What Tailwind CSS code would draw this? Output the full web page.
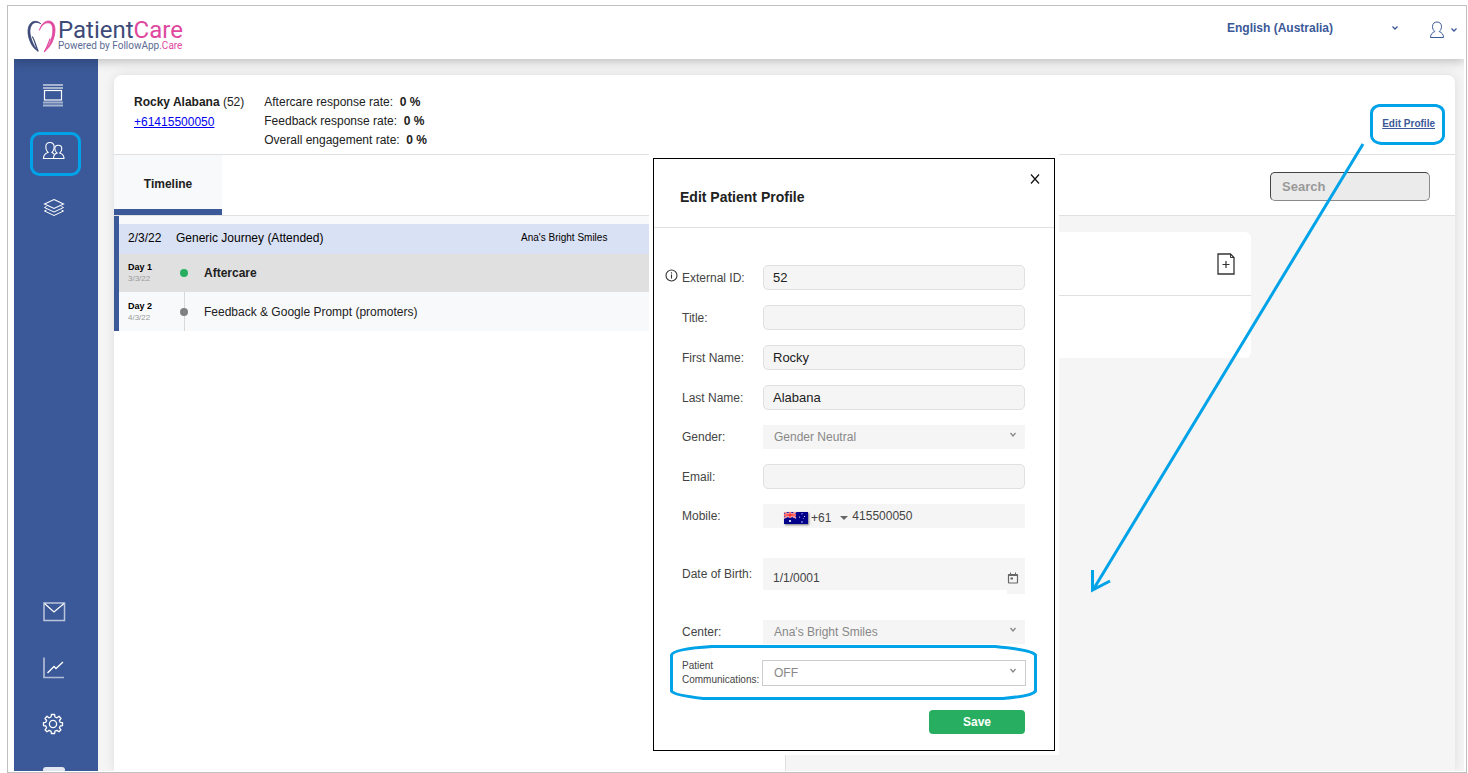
<!DOCTYPE html>
<html lang="en">
<head>
    <meta charset="UTF-8">
    <meta name="viewport" content="width=device-width, initial-scale=1.0">
    <title>PatientCare</title>
    <script src="https://cdn.jsdelivr.net/npm/@tailwindcss/browser@4"></script>
</head>
<body class="bg-white font-['Liberation_Sans',Arial,sans-serif] text-xs text-[#212121]">
    <div class="relative h-screen pt-[5px] pl-[7px] pr-px">
        <div class="flex h-full flex-col border border-[#c0c0c0] pr-0.5 pb-px pl-1.5">

            <!-- Header -->
            <header class="relative z-10 flex h-[53px] shrink-0 items-start justify-between bg-white shadow-[0_2px_10px_rgba(0,0,0,0.25)] [clip-path:inset(0_0_-20px_0)]">
                <a href="#" class="flex items-start gap-px pt-[13px] pl-3" aria-label="PatientCare">
                    <svg class="h-[34px] w-[31px]" viewBox="0 0 31 34" fill="none" stroke-linecap="round">
                        <path d="M14.500 4.500C11.500 1.500 7 1.500 4.500 4.500C1 8.500 1.500 16 4 22C5.500 26 8 30 12 32C9.500 29 7.500 26 6 22C3.500 15 3 9.500 6 5.500C8 3 11 2.800 14.500 4.500Z" fill="#3d4a78" stroke="#3d4a78" stroke-width=".8"/>
                        <path d="M6.500 18C8.500 21 9.500 26 12 32" stroke="#3d4a78" stroke-width="1.300"/>
                        <path d="M13.500 11C15 5.500 18.500 2 22.500 2C27 2 29 6 29 11C28.800 19 25 28 18.500 32.500C23.500 27 26.500 19 26.800 12C27 7 25.500 3.800 22 3.800C18.500 3.800 15.500 6.500 13.500 11Z" fill="#e0479e" stroke="#e0479e" stroke-width=".8"/>
                        <path d="M24 20C22.500 24 21 28.500 18.500 32.500" stroke="#e0479e" stroke-width="1.300"/>
                    </svg>
                    <span class="flex flex-col font-[Roboto,sans-serif]">
                        <span class="h-[21px] text-2xl leading-[23px] text-[#3d4a78]">Patient<span class="text-[#e0479e]">Care</span></span>
                        <span class="text-[10px] leading-3 text-[#5b6b93]">Powered by FollowApp<span class="text-[#e0479e]">.Care</span></span>
                    </span>
                </a>
                <div class="flex items-center pt-[11px] pr-1.5 text-[#3b5998]">
                    <div class="relative mr-[31px] flex items-center">
                        <select aria-label="Language" class="w-[172px] appearance-none bg-transparent font-bold">
                            <option>English (Australia)</option>
                        </select>
                        <svg class="pointer-events-none absolute right-0 h-1.5 w-2" viewBox="0 0 8 6" fill="none" stroke="currentColor" stroke-width="1.300"><path d="M1.500 1.500L4 4L6.500 1.500"/></svg>
                    </div>
                    <button type="button" aria-label="Account" class="flex items-center gap-1.5 pt-1">
                        <svg class="h-[18px] w-[14px]" viewBox="0 0 14 18" fill="none" stroke="currentColor" stroke-width="1"><path d="M4.800 10.500C3.200 9.200 2.500 7.500 2.500 5.500C2.500 2.500 4.500 1 7 1S11.500 2.500 11.500 5.500C11.500 7.500 10.800 9.200 9.200 10.500C11.800 11.500 13.500 13.500 13.500 16.500H.5C.5 13.500 2.200 11.500 4.800 10.500Z"/></svg>
                        <svg class="h-1.5 w-2" viewBox="0 0 8 6" fill="none" stroke="currentColor" stroke-width="1.300"><path d="M1.500 1.500L4 4L6.500 1.500"/></svg>
                    </button>
                </div>
            </header>

            <div class="flex min-h-0 flex-1">
                <!-- Sidebar -->
                <nav class="flex w-[84px] shrink-0 flex-col items-center justify-between overflow-hidden bg-[#3b5998] pr-1 text-white">
                    <div class="flex flex-col items-center gap-8 pt-6">
                        <a href="#" aria-label="Dashboard">
                            <svg class="size-6" viewBox="0 0 24 24" fill="none" stroke="currentColor"><path d="M1 2H21M1 5H21M1 19.500H21M1 22.500H21" stroke-width="1.800" stroke-opacity=".55"/><rect x="2.500" y="7.500" width="17" height="9.500" stroke-width="1.200"/></svg>
                        </a>
                        <a href="#" aria-label="Patients">
                            <svg class="size-6" viewBox="0 0 24 24" fill="none" stroke="currentColor" stroke-width="1.100"><path d="M12 19.500H1.500C1.500 16 3 14.500 6 13.500C4.500 12 3.800 10.500 3.800 8C3.800 5 5.500 3.500 8 3.500S12 5 12.200 8C12.200 10.500 11.500 12 10 13.500C11 14 11.800 14.500 12.300 15.500"/><path d="M15 14C13.500 12.800 12.800 11.500 12.800 9.800C12.800 7.500 14.200 6.200 16.300 6.200S19.800 7.500 19.800 9.800C19.800 11.500 19.200 12.800 17.800 14C20.500 14.800 22 16.500 22 19.500H11.500C11.500 16.500 12.500 14.800 15 14Z"/></svg>
                        </a>
                        <a href="#" aria-label="Journeys">
                            <svg class="size-6" viewBox="0 0 24 24" fill="none" stroke="currentColor" stroke-width="1.100"><path d="M12 4.500L21.500 9L12 13.500L2.500 9Z"/><path d="M4.500 11.500L2.500 12.500L12 17L21.500 12.500L19.500 11.500M4.500 15L2.500 16L12 20.500L21.500 16L19.500 15" stroke-width="1"/></svg>
                        </a>
                    </div>
                    <div class="flex flex-col items-center gap-8">
                        <a href="#" aria-label="Messages">
                            <svg class="size-6" viewBox="0 0 24 24" fill="none" stroke="currentColor"><rect x="2" y="4" width="20.500" height="17.500" stroke-width="1.500" stroke-opacity=".65"/><path d="M2.500 4.500L12 13L22 4.500" stroke-width="1.200"/></svg>
                        </a>
                        <a href="#" aria-label="Reports">
                            <svg class="size-6" viewBox="0 0 24 24" fill="none" stroke="currentColor"><path d="M2 2.500V22.500H22" stroke-width="1.700" stroke-opacity=".6"/><path d="M5.500 18L12 11.500L14 13.500L21 7" stroke-width="1.300"/></svg>
                        </a>
                        <a href="#" aria-label="Settings">
                            <svg class="size-6" viewBox="0 0 24 24" fill="none" stroke="currentColor" stroke-width="1.300" stroke-linejoin="round"><g transform="translate(-1 1)"><circle cx="12" cy="12" r="3.600"/><path d="M10.400 2.500H13.600L14 5L16 5.800L18 4.300L20 6.500L18.400 8.500L19.200 10.300L21.500 10.600V13.600L19.200 14L18.400 15.800L20 17.800L18 19.800L16 18.400L14 19.200L13.600 21.500H10.400L10 19.200L8 18.400L6 19.800L4 17.800L5.600 15.800L4.800 14L2.500 13.600V10.600L4.800 10.300L5.600 8.500L4 6.500L6 4.300L8 5.800L10 5Z"/></g></svg>
                        </a>
                        <span class="h-1 w-[22px] rounded-t-[3px] bg-white/85"></span>
                    </div>
                </nav>

                <!-- Content -->
                <main class="flex min-w-0 flex-1 overflow-hidden bg-[#f5f5f5] pt-4 pr-[9px] pl-4">
                    <div class="flex min-w-0 flex-1 flex-col overflow-hidden rounded-t-lg bg-white shadow-[0_0_12px_rgba(0,0,0,0.1)]">
                        <section class="flex h-20 shrink-0 border-b border-[#e0e0e0] px-5 pt-[17px]">
                            <div class="mr-5 leading-5">
                                <p><b>Rocky Alabana</b> (52)</p>
                                <a href="#" class="text-[#0000ee] underline">+61415500050</a>
                            </div>
                            <div class="pt-px leading-[19px]">
                                <p>Aftercare response rate: &nbsp;<b>0 %</b></p>
                                <p>Feedback response rate: &nbsp;<b>0 %</b></p>
                                <p>Overall engagement rate: &nbsp;<b>0 %</b></p>
                            </div>
                            <a href="#" class="mt-[25px] ml-auto text-[10px] font-bold text-[#3b5998] underline">Edit Profile</a>
                        </section>

                        <div class="flex h-[61px] shrink-0 items-center justify-between border-b border-[#e0e0e0] pr-[25px]">
                            <button type="button" class="h-full w-[108px] border-b-6 border-[#3b5998] bg-[#f8f9fb] pt-1 font-bold">Timeline</button>
                            <input type="search" aria-label="Search" placeholder="Search" class="mt-0.5 h-[29px] w-40 rounded-[5px] border border-[#8a8a8a] border-t-[#444] border-l-[#444] bg-[#ebebeb] px-[11px] text-[13px] font-bold placeholder:text-[#999]">
                        </div>

                        <div class="grid min-h-0 flex-1 grid-cols-2">
                            <!-- Timeline -->
                            <section>
                                <div class="border-l-5 border-[#3b5998] bg-[#f8f9fb] pt-2">
                                    <div class="flex h-[30px] items-center bg-[#d9e1f4] pb-0.5 pl-[9px] text-black">
                                        <span class="w-12">2/3/22</span>
                                        <span class="w-[345px]">Generic Journey (Attended)</span>
                                        <span class="text-[10px]">Ana's Bright Smiles</span>
                                    </div>
                                    <div class="flex h-[38px] items-center bg-[#e0e0e0] pl-[9px]">
                                        <div class="w-[52px] leading-[11px]">
                                            <p class="text-[9px] font-bold text-black">Day 1</p>
                                            <p class="text-[8px] text-[#999]">3/3/22</p>
                                        </div>
                                        <span class="mr-4 size-2 rounded-full bg-[#27ae60]"></span>
                                        <b>Aftercare</b>
                                    </div>
                                    <div class="flex h-[39px] items-center pl-[9px]">
                                        <div class="w-[52px] leading-3">
                                            <p class="text-[9px] font-bold text-black">Day 2</p>
                                            <p class="text-[8px] text-[#999]">4/3/22</p>
                                        </div>
                                        <span class="mr-4 flex h-full w-2 items-center bg-[linear-gradient(#d8d8d8,#d8d8d8)] bg-[length:1px_100%] bg-center bg-no-repeat"><span class="size-2 rounded-full bg-[#808080]"></span></span>
                                        <span>Feedback &amp; Google Prompt (promoters)</span>
                                    </div>
                                </div>
                            </section>

                            <!-- Details -->
                            <section class="border-l border-[#e0e0e0] bg-[#f5f5f5] py-4 pr-[204px] pl-4">
                                <div class="h-[126px] rounded-md bg-white">
                                    <div class="flex h-16 items-center justify-end border-b border-[#e0e0e0] pr-4">
                                        <button type="button" aria-label="Add note">
                                            <svg class="h-[22px] w-[18px]" viewBox="0 0 18 22" fill="none" stroke="#333"><path d="M1 1H13.500L17 4.500V21H1Z" stroke-width="1.300"/><path d="M13.500 1V4.500H17"/><path d="M5.500 11.500H12.500M9 8V15" stroke-width="1.200"/></svg>
                                        </button>
                                    </div>
                                </div>
                            </section>
                        </div>
                    </div>
                </main>
            </div>
        </div>

        <!-- Edit patient modal -->
        <div role="dialog" aria-labelledby="modalTitle" class="absolute top-[154px] left-[649px] z-20 w-[410px] bg-white p-1">
            <div class="border border-black pb-4">
                <div class="relative flex h-[69px] items-center border-b border-[#e0e0e0] pt-2 pl-[26px]">
                    <h2 id="modalTitle" class="text-sm font-bold">Edit Patient Profile</h2>
                    <button type="button" aria-label="Close" class="absolute top-[15px] right-3.5">
                        <svg class="size-2.5" viewBox="0 0 10 10" stroke="#111" stroke-width="1.200"><path d="M1 .5L9 9.500M9 .5L1 9.500"/></svg>
                    </button>
                </div>
                <form class="flex flex-col gap-[15px] pt-[37px] pr-[29px] pl-[11px] text-[#444]">
                    <div class="flex h-[25px] items-center">
                        <svg class="mr-1 mb-1 size-[13px]" viewBox="0 0 13 13" fill="none" stroke="#333" stroke-width="1.100"><circle cx="6.500" cy="6.500" r="5.500"/><path d="M6.500 5.500V9.500M6.500 3.300V4.500"/></svg>
                        <label for="externalId" class="w-[81px]">External ID:</label>
                        <input id="externalId" value="52" class="h-full flex-1 rounded-[5px] border border-[#e0e0e0] bg-[#f5f5f5] px-[9px] text-[13px] text-[#212121]">
                    </div>
                    <div class="flex h-[25px] items-center pl-[17px]">
                        <label for="title" class="w-[81px]">Title:</label>
                        <input id="title" class="h-full flex-1 rounded-[5px] border border-[#e0e0e0] bg-[#f5f5f5] px-[9px] text-[13px] text-[#212121]">
                    </div>
                    <div class="flex h-[25px] items-center pl-[17px]">
                        <label for="firstName" class="w-[81px]">First Name:</label>
                        <input id="firstName" value="Rocky" class="h-full flex-1 rounded-[5px] border border-[#e0e0e0] bg-[#f5f5f5] px-[9px] text-[13px] text-[#212121]">
                    </div>
                    <div class="flex h-[25px] items-center pl-[17px]">
                        <label for="lastName" class="w-[81px]">Last Name:</label>
                        <input id="lastName" value="Alabana" class="h-full flex-1 rounded-[5px] border border-[#e0e0e0] bg-[#f5f5f5] px-[9px] text-[13px] text-[#212121]">
                    </div>
                    <div class="relative flex h-6 items-center pl-[17px]">
                        <label for="gender" class="w-[81px]">Gender:</label>
                        <select id="gender" class="h-full flex-1 appearance-none bg-[#f5f5f5] px-[11px] text-[#888]">
                            <option>Gender Neutral</option>
                        </select>
                        <svg class="pointer-events-none absolute top-[7px] right-2 h-1.5 w-2" viewBox="0 0 8 6" fill="none" stroke="#888" stroke-width="1.300"><path d="M1.500 1L4 4L6.500 1"/></svg>
                    </div>
                    <div class="flex h-[25px] items-center pl-[17px]">
                        <label for="email" class="w-[81px]">Email:</label>
                        <input id="email" type="email" class="h-full flex-1 rounded-[5px] border border-[#e0e0e0] bg-[#f5f5f5] px-[9px] text-[13px] text-[#212121]">
                    </div>
                    <div class="flex h-6 items-center pl-[17px]">
                        <label for="mobile" class="w-[81px]">Mobile:</label>
                        <div class="flex h-full flex-1 items-center bg-[#f5f5f5] pl-[21px]">
                            <button type="button" aria-label="Country code" class="flex items-center pt-1">
                                <svg class="mr-[3px] h-3 w-6 shadow-[1px_1px_2px_rgba(0,0,0,0.5)]" viewBox="0 0 24 12"><path fill="#00008b" d="M0 0H24V12H0Z"/><path d="M0 0L12 6M12 0L0 6" stroke="#fff" stroke-width="1.500"/><path d="M6 0V6M0 3H12" stroke="#fff" stroke-width="2.600"/><path d="M0 0L12 6M12 0L0 6" stroke="#f44" stroke-width=".8"/><path d="M6 0V6M0 3H12" stroke="#f33" stroke-width="1.500"/><g fill="#fff"><circle cx="6" cy="9" r="1.100"/><circle cx="18" cy="1.800" r=".6"/><circle cx="15.500" cy="5" r=".6"/><circle cx="20.500" cy="4.500" r=".6"/><circle cx="18" cy="10" r=".7"/><circle cx="19.200" cy="6.500" r=".4"/></g></svg>
                                <span>+61</span>
                                <svg class="ml-[9px] h-1 w-2" viewBox="0 0 8 4" fill="#666"><path d="M0 0H8L4 4Z"/></svg>
                            </button>
                            <input id="mobile" type="tel" value="415500050" class="ml-1 w-32 bg-transparent">
                        </div>
                    </div>
                    <div class="mt-[15px] flex h-9 items-start pl-[17px]">
                        <label for="birthDate" class="w-[81px] pt-2">Date of Birth:</label>
                        <div class="flex flex-1">
                            <input id="birthDate" value="1/1/0001" class="h-8 w-[244px] bg-[#f5f5f5] px-2.5 pt-2">
                            <button type="button" aria-label="Open calendar" class="flex h-9 flex-1 items-center justify-center bg-[#f5f5f5] pt-1 pr-1.5">
                                <svg class="size-3" viewBox="0 0 12 12" fill="none" stroke="#666"><rect x="1.500" y="2.500" width="9" height="8.500" rx=".5" stroke-width="1.200"/><path d="M1.500 3H10.500" stroke-width="2"/><path d="M3.500 .5V2.500M8.500 .5V2.500"/><path d="M3.500 6.500H6" stroke-width="2"/></svg>
                            </button>
                        </div>
                    </div>
                    <div class="relative mt-[11px] flex h-6 items-center pl-[17px]">
                        <label for="center" class="w-[81px]">Center:</label>
                        <select id="center" class="h-full flex-1 appearance-none bg-[#f5f5f5] px-[11px] text-[#888]">
                            <option>Ana's Bright Smiles</option>
                        </select>
                        <svg class="pointer-events-none absolute top-[7px] right-2 h-1.5 w-2" viewBox="0 0 8 6" fill="none" stroke="#888" stroke-width="1.300"><path d="M1.500 1L4 4L6.500 1"/></svg>
                    </div>
                    <div class="relative mt-px -mr-px flex h-[26px] items-center pl-[17px]">
                        <label for="communications" class="w-20 text-[10px] leading-[14px]">Patient Communications:</label>
                        <select id="communications" class="h-full flex-1 appearance-none border border-[#ccc] bg-white px-[11px] text-[#888]">
                            <option>OFF</option>
                        </select>
                        <svg class="pointer-events-none absolute top-2 right-[9px] h-1.5 w-2" viewBox="0 0 8 6" fill="none" stroke="#888" stroke-width="1.300"><path d="M1.500 1L4 4L6.500 1"/></svg>
                    </div>
                    <button type="submit" class="mt-[9px] h-6 w-24 self-end rounded-sm bg-[#27ae60] font-bold text-white">Save</button>
                </form>
            </div>
        </div>

        <!-- Walkthrough marks -->
        <svg class="pointer-events-none absolute top-0 left-0 z-30 h-[773px] w-[1468px]" viewBox="0 0 1468 773" fill="none" stroke="#00a2e8" stroke-width="3">
            <rect x="31.500" y="133.500" width="48" height="41" rx="8"/>
            <path d="M1379 105.500H1436Q1443.500 107 1443.500 113V136Q1443 142 1434 143.500H1381Q1372 142 1371.500 136V113Q1372 107 1379 105.500Z"/>
            <path d="M1363 144L1093 590M1092.500 570V590L1110 581"/>
            <path d="M712 646.500H995Q1033 650 1035.500 655V691Q1033 696 1003 698.500H703Q673 695 671.500 691V655Q673 649 712 646.500Z"/>
        </svg>
    </div>
</body>
</html>
